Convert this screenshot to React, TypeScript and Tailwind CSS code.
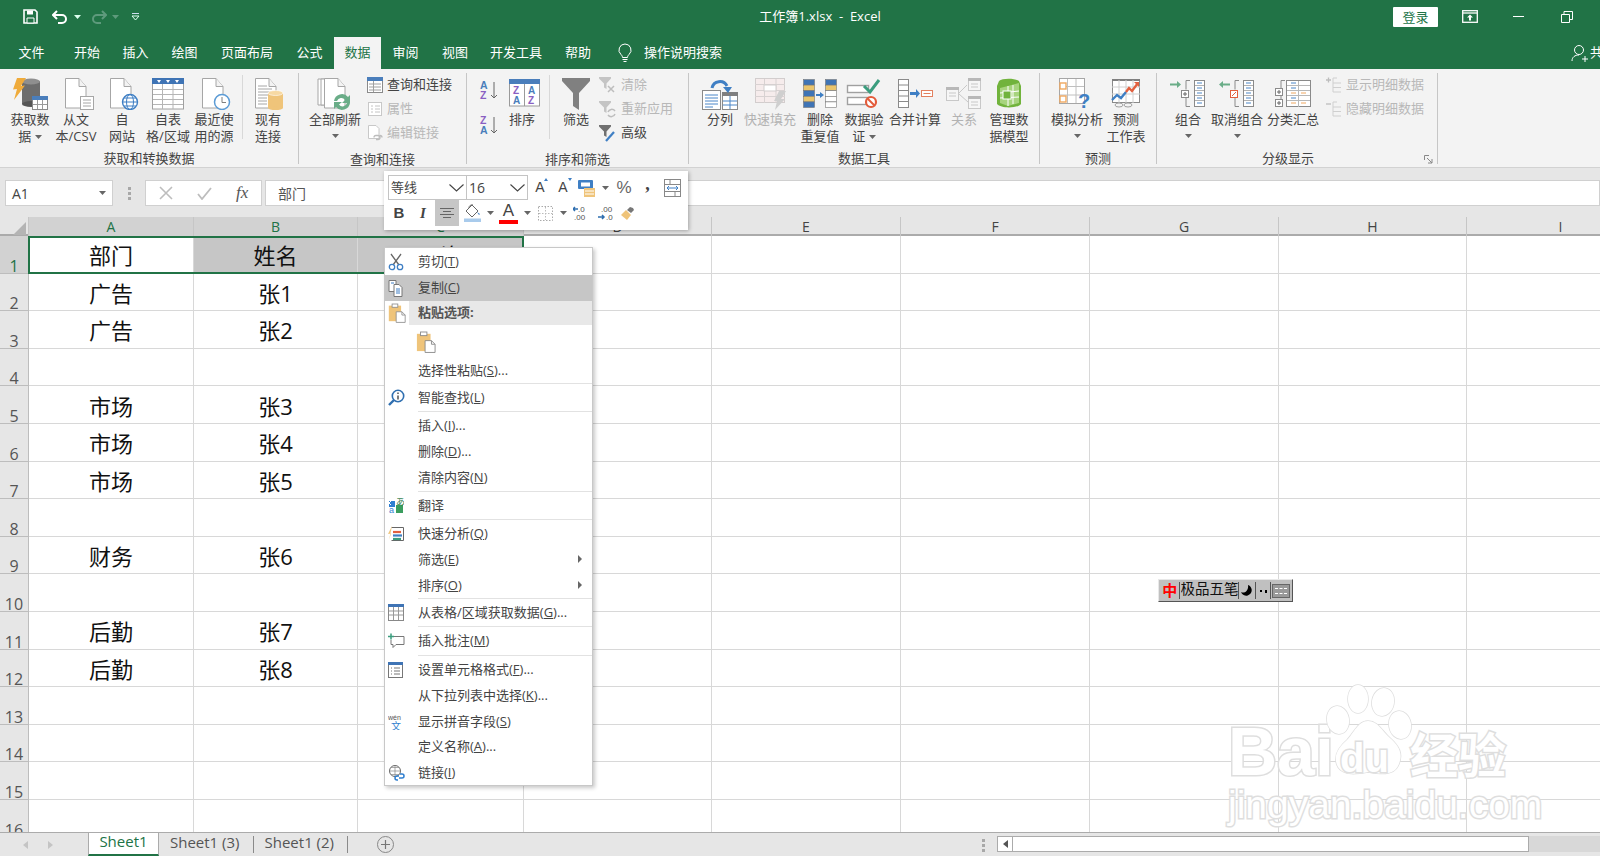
import type { ReactNode } from "react";

const Caret = ({ c = "#666" }: { c?: string }) => (
  <svg width="7" height="4" viewBox="0 0 7 4" className="inline-block">
    <path d="M0 0h7L3.5 4z" fill={c} />
  </svg>
);

const Doc = ({ x = 0 }: { x?: number }) => (
  <g transform={`translate(${x} 0)`}>
    <path d="M.5.5H14l7 8v21.5H.5z" fill="#fff" stroke="#a6a6a6" />
    <path d="M14 .5v8h7" fill="#f3f3f3" stroke="#a6a6a6" />
  </g>
);

// ribbon icons, all roughly 36x32
const IGetData = () => (
  <svg width="36" height="32" viewBox="0 0 36 32">
    <rect x="10" y="3" width="18" height="23" fill="#6d6d6d" />
    <ellipse cx="19" cy="26" rx="9" ry="3" fill="#555" />
    <ellipse cx="19" cy="3.5" rx="9" ry="3" fill="#8f8f8f" />
    <path d="M5 0h9L9 8l4-.5L2 22l3-11-4 .5z" fill="#efab3b" />
    <rect x="20.5" y="18.5" width="15" height="13" fill="#fff" stroke="#8a8a8a" />
    <rect x="20" y="18" width="16" height="4" fill="#4a7ebb" />
    <path d="M25.5 22v9M30.5 22v9M21 26.5h14" stroke="#9a9a9a" />
  </svg>
);
const IText = () => (
  <svg width="36" height="32" viewBox="0 0 36 32">
    <Doc x={7} />
    <rect x="22.5" y="18.5" width="13" height="13" fill="#fff" stroke="#a6a6a6" />
    <path d="M25 22h8M25 25h8M25 28h8" stroke="#a6a6a6" />
  </svg>
);
const IWeb = () => (
  <svg width="36" height="32" viewBox="0 0 36 32">
    <Doc x={6} />
    <circle cx="26" cy="24" r="7.5" fill="#fff" stroke="#3f7fc4" strokeWidth="1.4" />
    <ellipse cx="26" cy="24" rx="3.5" ry="7.5" fill="none" stroke="#3f7fc4" />
    <path d="M18.5 24h15M20 20h12M20 28h12" stroke="#3f7fc4" />
  </svg>
);
const ITable = () => (
  <svg width="36" height="32" viewBox="0 0 36 32">
    <rect x="2.5" y="1" width="31" height="30" fill="#fff" stroke="#a0a0a0" />
    <rect x="2" y="0" width="32" height="6" fill="#3f74b5" />
    <path d="M7 2h4l-2 3zM16 2h4l-2 3zM25 2h4l-2 3z" fill="#fff" />
    <path d="M12.5 6v25M23 6v25M3 11.5h30M3 16.5h30M3 21.5h30M3 26.5h30" stroke="#b5b5b5" />
  </svg>
);
const IRecent = () => (
  <svg width="36" height="32" viewBox="0 0 36 32">
    <Doc x={6} />
    <circle cx="26" cy="24" r="7.5" fill="#fff" stroke="#5b9bd5" strokeWidth="1.5" />
    <path d="M26 19v5.5h4" fill="none" stroke="#7f7f7f" />
  </svg>
);
const IExisting = () => (
  <svg width="36" height="32" viewBox="0 0 36 32">
    <Doc x={5} />
    <path d="M8 8h9M8 11h14M8 14h14M8 17h14M8 20h9M8 23h9M8 26h9" stroke="#a6a6a6" />
    <rect x="18" y="15" width="15" height="15" fill="#efc47a" />
    <ellipse cx="25.5" cy="15" rx="7.5" ry="2.5" fill="#f7d9a3" stroke="#fff" strokeWidth=".6" />
    <ellipse cx="25.5" cy="30" rx="7.5" ry="2" fill="#efc47a" />
  </svg>
);
const IRefresh = () => (
  <svg width="36" height="32" viewBox="0 0 36 32">
    <path d="M1 1h13v26H1z" fill="#fff" stroke="#a6a6a6" />
    <path d="M4 1h13v26H4z" fill="#fff" stroke="#a6a6a6" />
    <Doc x={7} />
    <path d="M17 23a8 8 0 0 1 14-4l2-2v8h-8l3-3a4.500 4.500 0 0 0-8 1z" fill="#6aad88" />
    <path d="M33 25a8 8 0 0 1-14 4l-2 2v-7h8l-3 2.500a4.500 4.500 0 0 0 8-1.500z" fill="#6aad88" />
  </svg>
);
const ISmallWin = () => (
  <svg width="16" height="16" viewBox="0 0 16 16">
    <rect x=".5" y=".5" width="15" height="15" fill="#fff" stroke="#8a8a8a" />
    <rect x="0" y="0" width="16" height="4" fill="#4a7ebb" />
    <path d="M6.500 4v11M2 7h12M2 10h12M2 13h12" stroke="#a0a0a0" />
  </svg>
);
const IProps = () => (
  <svg width="16" height="16" viewBox="0 0 16 16">
    <rect x="1.500" y="1.500" width="13" height="13" fill="#fff" stroke="#c8c8c8" />
    <path d="M4 5h2M8 5h5M4 8h2M8 8h5M4 11h2M8 11h5" stroke="#c4c4c4" />
  </svg>
);
const ILinks = () => (
  <svg width="16" height="16" viewBox="0 0 16 16">
    <path d="M1.500.5H9l3 3v10H1.500z" fill="#fff" stroke="#c8c8c8" />
    <path d="M7 12.500a2 2 0 0 1 2-2h2a2 2 0 0 1 0 4H9M15 12.500a2 2 0 0 0-2-2" fill="none" stroke="#bcbcbc" strokeWidth="1.300" />
  </svg>
);
const ISortAZ = ({ top, bottom, c1, c2 }: { top: string; bottom: string; c1: string; c2: string }) => (
  <svg width="20" height="22" viewBox="0 0 20 22">
    <text x="1" y="10" fontSize="10.500" fontWeight="700" fontFamily="'Liberation Sans',sans-serif" fill={c1}>{top}</text>
    <text x="1" y="20" fontSize="10.500" fontWeight="700" fontFamily="'Liberation Sans',sans-serif" fill={c2}>{bottom}</text>
    <path d="M15 3v16M12 16l3 3 3-3" fill="none" stroke="#666" />
  </svg>
);
const ISort = () => (
  <svg width="36" height="32" viewBox="0 0 36 32">
    <rect x="5.500" y="4" width="30" height="24" fill="#fff" stroke="#9a9a9a" />
    <rect x="5" y="1" width="31" height="5" fill="#4a7ebb" />
    <path d="M20.500 6v22" stroke="#9a9a9a" />
    <g fontSize="10" fontFamily="'Liberation Sans',sans-serif" fontWeight="700">
      <text x="9" y="16" fill="#8a5fc2">Z</text>
      <text x="9" y="26" fill="#4a7ebb">A</text>
      <text x="24" y="16" fill="#4a7ebb">A</text>
      <text x="24" y="26" fill="#8a5fc2">Z</text>
    </g>
  </svg>
);
const IFunnel = () => (
  <svg width="36" height="32" viewBox="0 0 36 32">
    <path d="M4 0h28v3L21 15v17l-6-4V15L4 3z" fill="#808080" />
  </svg>
);
const ISmallFunnel = ({ c, children }: { c: string; children?: ReactNode }) => (
  <svg width="18" height="18" viewBox="0 0 18 18">
    <path d="M0 1h12v1.500L7.500 7.500V13L5 11.500v-4L0 2.500z" fill={c} />
    {children}
  </svg>
);
const ISplit = () => (
  <svg width="36" height="32" viewBox="0 0 36 32">
    <rect x=".5" y="12.500" width="18" height="19" fill="#fff" stroke="#8a8a8a" />
    <path d="M3 17h13M3 20h13M3 23h13M3 26h13M3 29h8" stroke="#4a86c8" />
    <rect x="20.500" y="15" width="15" height="16.500" fill="#fff" stroke="#8a8a8a" />
    <rect x="20" y="14" width="16" height="4" fill="#7f7f7f" />
    <path d="M28 18v13M21 23h14M21 27h14" stroke="#4a86c8" />
    <path d="M10 10a8 8 0 0 1 15-2" fill="none" stroke="#3f7fc4" strokeWidth="3" />
    <path d="M21 9h9l-4 6z" fill="#3f7fc4" />
  </svg>
);
const IFlash = () => (
  <svg width="36" height="32" viewBox="0 0 36 32">
    <rect x="3.500" y=".5" width="29" height="24" fill="#f6ecec" stroke="#d2cdcd" />
    <path d="M3 6.500h30M3 12.500h30M3 18.500h30M12.500 1v24M24 1v24" stroke="#d8d2d2" />
    <rect x="12" y="7" width="12" height="6" fill="#fff" stroke="#d2cdcd" />
    <path d="M27 13h7l-5 8h4L23 32l2-9h-3z" fill="#cfcfcf" />
  </svg>
);
const IRemoveDup = () => {
  const col = (x: number, rows: string[]) =>
    rows.map((f, i) => <rect key={i} x={x + 0.5} y={i * 5.6 + 0.5} width="11" height="5.600" fill={f} stroke="#777" strokeWidth=".6" />);
  const b = "#3f74b5", y = "#e9c46c", w = "#fff";
  return (
    <svg width="36" height="30" viewBox="0 0 36 30">
      {col(1, [b, y, b, y, b])}
      {col(23, [b, y, w, w, w])}
      <path d="M14 15h4v-2l4 3-4 3v-2h-4z" fill="#3f7fc4" />
    </svg>
  );
};
const IValidate = () => (
  <svg width="36" height="32" viewBox="0 0 36 32">
    <rect x="1.500" y="7.500" width="21" height="7" fill="#fff" stroke="#a0a0a0" strokeWidth="1.400" />
    <rect x="1.500" y="19.500" width="21" height="7" fill="#fff" stroke="#a0a0a0" strokeWidth="1.400" />
    <path d="M18 8l6 6L33 2" fill="none" stroke="#3a9d7e" strokeWidth="3" />
    <circle cx="25" cy="24" r="5" fill="#fff" stroke="#e35b3a" strokeWidth="2.200" />
    <path d="M21.500 20.500l7 7" stroke="#e35b3a" strokeWidth="2" />
  </svg>
);
const IConsolidate = () => (
  <svg width="36" height="30" viewBox="0 0 36 30">
    <rect x="1.500" y=".5" width="10" height="28" fill="#fff" stroke="#8a8a8a" />
    <path d="M2 6h9M2 11.500h9M2 17h9M2 22.500h9" stroke="#8a8a8a" />
    <path d="M13 13h6v-3l4 4.500-4 4.500v-3h-6z" fill="#3f7fc4" />
    <rect x="24.500" y="11.500" width="11" height="6" fill="#fff" stroke="#e2805f" />
    <path d="M26.500 14.500h7" stroke="#e2805f" />
  </svg>
);
const IRelations = () => (
  <svg width="36" height="32" viewBox="0 0 36 32">
    <g fill="#f6f6f6" stroke="#c8c8c8">
      <rect x=".5" y="9.500" width="12" height="13" />
      <rect x="22.500" y=".5" width="12" height="12" />
      <rect x="22.500" y="18.500" width="12" height="12" />
    </g>
    <g fill="#b8b8b8">
      <rect x="0" y="9" width="13" height="3" />
      <rect x="22" y="0" width="13" height="3" />
      <rect x="22" y="18" width="13" height="3" />
    </g>
    <path d="M13 15L21 7M13 16l9 8M3 15h7M3 18h7M25 6h7M25 9h7M25 24h7M25 27h7" stroke="#c8c8c8" fill="none" />
  </svg>
);
const IModel = () => (
  <svg width="28" height="32" viewBox="0 0 28 32">
    <path d="M4 3c3-3 16-3 20 0l2 5v18c-2 4-20 5-24 0V8z" fill="#71b33c" />
    <path d="M13 8l11-3v20l-11 3zM5 10l8-2v20l-8-3z" fill="#a7d47e" />
    <path d="M13 8v20M18 7v19M5 15l19-2M5 20l19-1" stroke="#fff" />
    <rect x="8" y="13" width="8" height="8" fill="#71b33c" stroke="#fff" />
  </svg>
);
const IWhatIf = () => (
  <svg width="36" height="32" viewBox="0 0 36 32">
    <rect x=".5" y=".5" width="25" height="25" fill="#fff" stroke="#a6a6a6" />
    <path d="M8.500 1v24M17 1v24M1 8.500h24M1 17h24" stroke="#c0c0c0" />
    <rect x="1" y="5" width="6" height="6" fill="#fff" stroke="#f0a860" strokeWidth="1.400" />
    <rect x="1" y="18" width="6" height="6" fill="#fff" stroke="#f0a860" strokeWidth="1.400" />
    <text x="19" y="30" fontSize="20" fontWeight="700" fontFamily="'Liberation Sans',sans-serif" fill="#3f7fc4">?</text>
  </svg>
);
const IForecast = () => (
  <svg width="36" height="32" viewBox="0 0 36 32">
    <rect x="4.500" y="1.500" width="27" height="23" fill="#fff" stroke="#8a8a8a" />
    <rect x="4" y="1" width="28" height="2" fill="#7f7f7f" />
    <path d="M4 9h28M4 16h28M11 2v23M18 2v23M25 2v23" stroke="#d0d0d0" />
    <path d="M4 22l5-5 4 3 5-6" fill="none" stroke="#3f7fc4" strokeWidth="2.400" />
    <path d="M18 14l3-4 3 3 6-8" fill="none" stroke="#e2603f" strokeWidth="2.400" />
    <path d="M26 4h5v5z" fill="#e2603f" />
    <ellipse cx="11" cy="27" rx="4" ry="2" fill="none" stroke="#a0a0a0" />
    <ellipse cx="20" cy="27" rx="4" ry="2" fill="none" stroke="#a0a0a0" />
  </svg>
);
const ListCol = ({ x }: { x: number }) => (
  <g>
    <rect x={x + 0.5} y=".5" width="10" height="26" fill="#fff" stroke="#8a8a8a" />
    <path d={`M${x + 1} 5.500h9M${x + 1} 10.500h9M${x + 1} 15.500h9M${x + 1} 20.500h9`} stroke="#b0b0b0" />
    <path d={`M${x + 3} 3h5M${x + 3} 8h5M${x + 3} 13h5M${x + 3} 18h5M${x + 3} 23h5`} stroke="#4a86c8" />
  </g>
);
const IGroup = () => (
  <svg width="36" height="28" viewBox="0 0 36 28">
    <path d="M0 3.500h7V1l4 3.500L7 8V5.500H0z" fill="#6aad88" />
    <path d="M20 .5h-4v9M16 18v8.500h4" fill="none" stroke="#8a8a8a" />
    <rect x="11.500" y="10.500" width="7" height="7" fill="#fff" stroke="#8a8a8a" />
    <path d="M13 14h4M15 12v4" stroke="#666" />
    <ListCol x={24} />
  </svg>
);
const IUngroup = () => (
  <svg width="36" height="28" viewBox="0 0 36 28">
    <path d="M11 3.500H4V1L0 4.500 4 8V5.500h7z" fill="#6aad88" />
    <path d="M20 .5h-4v9M16 18v8.500h4" fill="none" stroke="#8a8a8a" />
    <rect x="11.500" y="10.500" width="7" height="7" fill="#fff" stroke="#e2603f" />
    <path d="M13 16l4-4" stroke="#e2603f" />
    <ListCol x={24} />
  </svg>
);
const ISubtotal = () => (
  <svg width="36" height="28" viewBox="0 0 36 28">
    <path d="M10 .5H6v8M6 16v3" fill="none" stroke="#8a8a8a" />
    <rect x=".5" y="8.500" width="7" height="7" fill="#fff" stroke="#8a8a8a" />
    <rect x=".5" y="19.500" width="7" height="7" fill="#fff" stroke="#8a8a8a" />
    <path d="M2 12h4M4 10v4M2 23h4M4 21v4" stroke="#666" />
    <rect x="11.500" y=".5" width="24" height="26" fill="#fff" stroke="#8a8a8a" />
    <path d="M12 5.500h23M12 10.500h23M12 15.500h23M12 20.500h23M23.500 1v26" stroke="#b8b8b8" />
    <path d="M16 3h5M16 8h5M16 18h5" stroke="#4a86c8" />
    <path d="M16 13h5M26 13h5M16 23h5M26 23h5" stroke="#f0a860" />
  </svg>
);
const IDetail = ({ plus }: { plus?: boolean }) => (
  <svg width="16" height="16" viewBox="0 0 16 16">
    <path d={plus ? "M0 3h5M2.500.5v5" : "M0 3h5"} stroke="#bdbdbd" strokeWidth="1.300" />
    <path d="M7 1h4M7 6h8M7 10.500h8M7 15h8M7 1v14" stroke="#cfcfcf" fill="none" />
  </svg>
);

const Big = ({ w, icon, lines, caret, dim }: { w: string; icon: ReactNode; lines: ReactNode[]; caret?: boolean; dim?: boolean }) => (
  <div className={`${w} shrink-0 flex flex-col items-center pt-[4px] ${dim ? "text-[#b2b2b2]" : "text-[#444]"}`}>
    <div className="h-[34px] flex items-center justify-center">{icon}</div>
    {lines.map((l, i) => (
      <div key={i} className="h-[16.500px] leading-[16.500px] whitespace-nowrap">{l}</div>
    ))}
    {caret && <div className="h-[16px] flex items-center"><Caret /></div>}
  </div>
);

const Small = ({ icon, label, dim, cls = "w-[16px]" }: { icon: ReactNode; label: string; dim?: boolean; cls?: string }) => (
  <div className={`h-[24px] flex items-center whitespace-nowrap ${dim ? "text-[#b8b8b8]" : "text-[#444]"}`}>
    <span className={`${cls} flex justify-center shrink-0`}>{icon}</span>
    <span className="ml-[4px]">{label}</span>
  </div>
);

const Group = ({ w, label, children, labelCls = "" }: { w: string; label: string; children: ReactNode; labelCls?: string }) => (
  <div className={`${w} shrink-0 h-[91px] mt-[4px] border-r border-[#c6c6c6] flex flex-col relative`}>
    <div className="h-[73px] flex">{children}</div>
    <div className={`h-[16px] mt-[6px] leading-[16px] text-center text-[#444] ${labelCls}`}>{label}</div>
  </div>
);

const VSep = ({ cls }: { cls: string }) => <div className={`w-px h-[64px] bg-[#d8d8d8] shrink-0 ${cls}`} />;

const tabs = [
  { t: "文件", w: "w-[63px]" },
  { t: "开始", w: "w-[48px]" },
  { t: "插入", w: "w-[49px]" },
  { t: "绘图", w: "w-[49px]" },
  { t: "页面布局", w: "w-[76px]" },
  { t: "公式", w: "w-[49px]" },
  { t: "数据", w: "w-[47px]", on: true },
  { t: "审阅", w: "w-[49px]" },
  { t: "视图", w: "w-[50px]" },
  { t: "开发工具", w: "w-[72px]" },
  { t: "帮助", w: "w-[52px]" },
];

const TitleBar = () => (
  <div className="h-[37px] bg-[#217346] flex items-center text-white shrink-0 pb-[4px]">
    <div className="w-[247px] flex items-center pl-[23px] shrink-0">
      <svg width="15" height="15" viewBox="0 0 15 15">
        <path d="M1 1h11l2 2v11H1z" fill="none" stroke="#fff" strokeWidth="1.600" />
        <path d="M4 1.500h6v4H4z" fill="#fff" />
        <path d="M4 9h7v5H4z" fill="#217346" stroke="#fff" />
      </svg>
      <svg width="17" height="14" viewBox="0 0 17 14" className="ml-[14px]">
        <path d="M5 1L1 5l4 4M2 5h8a4 4 0 0 1 0 8H6" fill="none" stroke="#fff" strokeWidth="2" />
      </svg>
      <span className="ml-[5px] flex"><Caret c="#dfe" /></span>
      <svg width="17" height="14" viewBox="0 0 17 14" className="ml-[9px]">
        <path d="M12 1l4 4-4 4M15 5H7a4 4 0 0 0 0 8h4" fill="none" stroke="#5e9a7c" strokeWidth="2" />
      </svg>
      <span className="ml-[5px] flex"><Caret c="#5e9a7c" /></span>
      <svg width="9" height="8" viewBox="0 0 9 8" className="ml-[12px]">
        <path d="M1 .500h7" stroke="#cde" />
        <path d="M1 3h7L4.500 7z" fill="none" stroke="#dfe" />
      </svg>
    </div>
    <div className="flex-1 text-center text-[13px]">工作簿1.xlsx&nbsp; -&nbsp; Excel</div>
    <div className="w-[207px] flex items-center shrink-0 h-full">
      <div className="w-[45px] h-[20px] bg-white rounded-[1px] text-[#217346] text-[13px] leading-[20px] text-center">登录</div>
      <svg width="16" height="13" viewBox="0 0 16 13" className="ml-[24px]">
        <rect x=".7" y=".7" width="14.600" height="11.600" fill="none" stroke="#fff" strokeWidth="1.300" />
        <path d="M1 3h14" stroke="#fff" strokeWidth="1.300" />
        <path d="M8 4.500l3 3H9v3H7v-3H5z" fill="#fff" />
      </svg>
      <div className="w-[11px] h-px bg-white ml-[35px]" />
      <svg width="12" height="12" viewBox="0 0 12 12" className="ml-[37px]">
        <path d="M.5 3.500h8v8h-8zM3 3.500v-3h8.500v8H8.500" fill="none" stroke="#fff" />
      </svg>
    </div>
  </div>
);

const TabRow = () => (
  <div className="h-[32px] bg-[#217346] flex text-white shrink-0 relative">
    {tabs.map((t) => (
      <div key={t.t} className={`${t.w} h-full shrink-0 flex items-center justify-center ${t.on ? "bg-[#f3f3f3] text-[#217346]" : ""}`}>
        {t.t}
      </div>
    ))}
    <svg width="14" height="20" viewBox="0 0 14 20" className="ml-[14px] mt-[6px] shrink-0">
      <path d="M7 1a6 6 0 0 0-4 10.500c1 1 1.500 2 1.500 3h5c0-1 .5-2 1.500-3A6 6 0 0 0 7 1zM4.500 16.500h5M5.500 18.500h3" fill="none" stroke="#fff" />
    </svg>
    <div className="ml-[12px] flex items-center whitespace-nowrap">操作说明搜索</div>
    <div className="ml-auto flex items-center w-[29px] overflow-hidden shrink-0">
      <svg width="18" height="18" viewBox="0 0 18 18" className="shrink-0">
        <circle cx="8" cy="6" r="4.500" fill="none" stroke="#fff" />
        <path d="M1 17c0-4 3-6 7-6M11 15h6M14 12v6" fill="none" stroke="#fff" />
      </svg>
      <span className="ml-[1px] shrink-0">共</span>
    </div>
  </div>
);

const Ribbon = () => (
  <div className="h-[99px] bg-[#f3f3f3] border-b border-[#d2d2d2] flex text-[13px] shrink-0">
    <Group w="w-[299px]" label="获取和转换数据">
      <div className="flex pl-[7px]">
        <Big w="w-[46px]" icon={<IGetData />} lines={["获取数", <>据 <Caret /></>]} />
        <Big w="w-[46px]" icon={<IText />} lines={["从文", "本/CSV"]} />
        <Big w="w-[46px]" icon={<IWeb />} lines={["自", "网站"]} />
        <Big w="w-[46px]" icon={<ITable />} lines={["自表", "格/区域"]} />
        <Big w="w-[46px]" icon={<IRecent />} lines={["最近使", "用的源"]} />
        <VSep cls="ml-[5px] mt-[2px]" />
        <div className="w-[2px]" />
        <Big w="w-[46px]" icon={<IExisting />} lines={["现有", "连接"]} />
      </div>
    </Group>
    <Group w="w-[168px]" label="查询和连接">
      <div className="flex pl-[4px]">
        <Big w="w-[64px]" icon={<IRefresh />} lines={["全部刷新"]} caret />
        <div className="flex flex-col">
          <Small icon={<ISmallWin />} label="查询和连接" />
          <Small icon={<IProps />} label="属性" dim />
          <Small icon={<ILinks />} label="编辑链接" dim />
        </div>
      </div>
    </Group>
    <Group w="w-[222px]" label="排序和筛选">
      <div className="flex pl-[12px]">
        <div className="w-[20px] flex flex-col pt-[6px] gap-[13px]">
          <ISortAZ top="A" bottom="Z" c1="#4a7ebb" c2="#8a5fc2" />
          <ISortAZ top="Z" bottom="A" c1="#8a5fc2" c2="#4a7ebb" />
        </div>
        <Big w="w-[46px]" icon={<ISort />} lines={["排序"]} />
        <VSep cls="ml-[4px] mt-[2px]" />
        <div className="w-[3px]" />
        <Big w="w-[46px]" icon={<IFunnel />} lines={["筛选"]} />
        <div className="flex flex-col">
          <Small cls="w-[18px]" dim label="清除" icon={<ISmallFunnel c="#c4c4c4"><path d="M9 10l6 6M15 10l-6 6" stroke="#bdbdbd" strokeWidth="1.500" /></ISmallFunnel>} />
          <Small cls="w-[18px]" dim label="重新应用" icon={<ISmallFunnel c="#c4c4c4"><path d="M9 12a4 4 0 0 1 7-1M16 14a4 4 0 0 1-7 1" fill="none" stroke="#bdbdbd" strokeWidth="1.500" /></ISmallFunnel>} />
          <Small cls="w-[18px]" label="高级" icon={<ISmallFunnel c="#707070"><path d="M7 17l8-9" stroke="#3f7fc4" strokeWidth="2.200" /></ISmallFunnel>} />
        </div>
      </div>
    </Group>
    <Group w="w-[351px]" label="数据工具">
      <div className="flex pl-[9px]">
        <Big w="w-[44px]" icon={<ISplit />} lines={["分列"]} />
        <Big w="w-[56px]" dim icon={<IFlash />} lines={["快速填充"]} />
        <Big w="w-[44px]" icon={<IRemoveDup />} lines={["删除", "重复值"]} />
        <Big w="w-[44px]" icon={<IValidate />} lines={["数据验", <>证 <Caret /></>]} />
        <Big w="w-[58px]" icon={<IConsolidate />} lines={["合并计算"]} />
        <Big w="w-[40px]" dim icon={<IRelations />} lines={["关系"]} />
        <Big w="w-[50px]" icon={<IModel />} lines={["管理数", "据模型"]} />
      </div>
    </Group>
    <Group w="w-[117px]" label="预测">
      <div className="flex pl-[7px]">
        <Big w="w-[60px]" icon={<IWhatIf />} lines={["模拟分析"]} caret />
        <Big w="w-[38px]" icon={<IForecast />} lines={["预测", "工作表"]} />
      </div>
    </Group>
    <Group w="w-[281px]" label="分级显示" labelCls="pr-[18px]">
      <div className="flex pl-[11px]">
        <Big w="w-[40px]" icon={<IGroup />} lines={["组合"]} caret />
        <Big w="w-[58px]" icon={<IUngroup />} lines={["取消组合"]} caret />
        <Big w="w-[54px]" icon={<ISubtotal />} lines={["分类汇总"]} />
        <div className="flex flex-col ml-[6px]">
          <Small icon={<IDetail plus />} label="显示明细数据" dim />
          <Small icon={<IDetail />} label="隐藏明细数据" dim />
        </div>
      </div>
      <svg width="10" height="10" viewBox="0 0 10 10" className="absolute right-[3px] bottom-[-1px]">
        <path d="M.5 5V.5H5M3 3l5 5M8 4v4H4" fill="none" stroke="#888" />
      </svg>
    </Group>
  </div>
);

const FormulaBar = () => (
  <div className="h-[49px] bg-[#e6e6e6] shrink-0 pt-[12px] flex">
    <div className="ml-[5px] w-[108px] h-[26px] bg-white border border-[#d0d0d0] flex items-center pl-[6px] text-[14px] text-[#444]">
      A1
      <span className="ml-auto mr-[6px] flex"><Caret /></span>
    </div>
    <div className="w-[32px] flex flex-col items-center justify-center gap-[2px] h-[26px]">
      <i className="w-[3px] h-[3px] bg-[#a8a8a8] block" />
      <i className="w-[3px] h-[3px] bg-[#a8a8a8] block" />
      <i className="w-[3px] h-[3px] bg-[#a8a8a8] block" />
    </div>
    <div className="w-[117px] h-[26px] bg-white border border-[#d0d0d0] flex items-center">
      <svg width="14" height="14" viewBox="0 0 14 14" className="ml-[13px]"><path d="M1 1l12 12M13 1L1 13" stroke="#bdbdbd" strokeWidth="1.600" /></svg>
      <svg width="15" height="13" viewBox="0 0 15 13" className="ml-[24px]"><path d="M1 7l4 5L14 1" fill="none" stroke="#bdbdbd" strokeWidth="1.800" /></svg>
      <span className="ml-[24px] italic text-[17px] font-['Liberation_Serif',serif] text-[#555]">fx</span>
    </div>
    <div className="ml-[3px] flex-1 h-[26px] bg-white border border-[#d0d0d0] flex items-center pl-[12px] text-[14px] text-[#555]">部门</div>
  </div>
);

const rows: Record<number, [string, string]> = {
  2: ["广告", "张1"],
  3: ["广告", "张2"],
  5: ["市场", "张3"],
  6: ["市场", "张4"],
  7: ["市场", "张5"],
  9: ["财务", "张6"],
  11: ["后勤", "张7"],
  12: ["后勤", "张8"],
};
const cols = ["A", "B", "C", "D", "E", "F", "G", "H", "I"];
const gridCls = "grid grid-cols-[29px_165px_164px_166px_188px_189px_189px_189px_188px_188px]";

const Sheet = () => (
  <div className="flex-1 overflow-hidden relative bg-white min-h-0">
    <div className={`${gridCls} h-[19px] bg-[#e6e6e6] border-b-2 border-[#ababab]`}>
      <div className="flex justify-end items-end pr-[2px] pb-[1px] border-r border-[#c6c6c6]">
        <div className="w-0 h-0 border-l-[13px] border-l-transparent border-b-[13px] border-b-[#b4b4b4]" />
      </div>
      {cols.map((c, i) => (
        <div key={c} className={`text-center text-[14px] leading-[19px] border-r border-[#c6c6c6] ${i < 3 ? "bg-[#d2d2d2] text-[#217346]" : "text-[#444]"}`}>{c}</div>
      ))}
    </div>
    <div className={`${gridCls} auto-rows-[37.6px] text-[22px] text-[#111]`}>
      {Array.from({ length: 16 }, (_, k) => k + 1).map((r) => (
        <div key={r} className="contents">
          <div className={`text-[16px] leading-[14px] text-center flex items-end justify-center border-b border-r border-[#bdbdbd] ${r === 1 ? "bg-[#d2d2d2] text-[#217346]" : "bg-[#e6e6e6] text-[#555]"}`}>{r}</div>
          {cols.map((c, i) => (
            <div key={c} className={`flex items-center justify-center pt-[3px] border-r border-b border-[#d8d8d8] ${r === 1 && (i === 1 || i === 2) ? "bg-[#c6c6c6]" : ""}`}>
              {r === 1 ? ["部门", "姓名", "工资"][i] : i < 2 ? rows[r]?.[i] : null}
            </div>
          ))}
        </div>
      ))}
    </div>
    <div className="absolute left-[28px] top-[19px] w-[496px] h-[38px] border-2 border-[#217346]" />
  </div>
);

const Tab = ({ children, on }: { children: string; on?: boolean }) => (
  <div className={`h-[23px] flex items-center justify-center text-[15px] ${on ? "w-[71px] bg-white text-[#217346] border-x border-b-2 border-x-[#ababab] border-b-[#217346] pb-[4px]" : "text-[#555] pl-[11px] pr-[13px] pb-[5px]"}`}>{children}</div>
);

const BottomBar = () => (
  <div className="h-[24px] bg-[#e6e6e6] border-t border-[#ababab] flex shrink-0 relative">
    <div className="w-[88px] flex items-center pl-[23px] gap-[20px] shrink-0">
      <span className="w-0 h-0 border-y-[4px] border-y-transparent border-r-[5px] border-r-[#c4c4c4]" />
      <span className="w-0 h-0 border-y-[4px] border-y-transparent border-l-[5px] border-l-[#c4c4c4]" />
    </div>
    <Tab on>Sheet1</Tab>
    <Tab>Sheet1 (3)</Tab>
    <div className="w-px h-[17px] bg-[#8a8a8a] mt-[3px]" />
    <Tab>Sheet1 (2)</Tab>
    <div className="w-px h-[17px] bg-[#8a8a8a] mt-[3px]" />
    <div className="ml-[29px] mt-[3px] w-[17px] h-[17px] rounded-full border border-[#888] flex items-center justify-center shrink-0">
      <svg width="9" height="9" viewBox="0 0 9 9"><path d="M0 4.500h9M4.500 0v9" stroke="#777" strokeWidth="1.200" /></svg>
    </div>
    <div className="ml-[588px] w-[4px] mt-[6px] flex flex-col gap-[2px] shrink-0">
      <i className="w-[3px] h-[3px] bg-[#a8a8a8] block" />
      <i className="w-[3px] h-[3px] bg-[#a8a8a8] block" />
      <i className="w-[3px] h-[3px] bg-[#a8a8a8] block" />
    </div>
    <div className="ml-[11px] mt-[3px] h-[16px] w-[16px] bg-white border border-[#ababab] flex items-center justify-center shrink-0">
      <span className="w-0 h-0 border-y-[4px] border-y-transparent border-r-[5px] border-r-[#555]" />
    </div>
    <div className="mt-[3px] h-[16px] w-[516px] bg-white border border-l-0 border-[#ababab] shrink-0" />
    <div className="mt-[3px] h-[16px] flex-1 bg-[#d8d8d8]" />
  </div>
);

const IconPaste = ({ w = 20, h = 22 }: { w?: number; h?: number }) => (
  <svg width={w} height={h} viewBox="0 0 22 24">
    <rect x="1" y="3" width="15" height="19" fill="#efc47a" />
    <rect x="5" y="1" width="7" height="4" fill="#fff" stroke="#8a8a8a" />
    <path d="M10 10.500h7l4 4v9H10z" fill="#fff" stroke="#8a8a8a" />
    <path d="M17 10.500v4h4" fill="none" stroke="#8a8a8a" />
  </svg>
);

type Item = { t: string; k: string; s?: string; h: string; icon?: ReactNode; arrow?: boolean; sep?: boolean; on?: boolean };

const menu: Item[] = [
  { t: "剪切", k: "T", h: "h-[26px]", icon: (
    <svg width="16" height="18" viewBox="0 0 16 18"><path d="M3 1l8 11M13 1L5 12" stroke="#666" strokeWidth="1.300" /><circle cx="4" cy="14" r="2.700" fill="none" stroke="#3f7fc4" strokeWidth="1.300" /><circle cx="12" cy="14" r="2.700" fill="none" stroke="#3f7fc4" strokeWidth="1.300" /></svg>
  ) },
  { t: "复制", k: "C", h: "h-[26px]", on: true, icon: (
    <svg width="16" height="17" viewBox="0 0 16 17"><path d="M1 .5h7v11H1z" fill="#fff" stroke="#777" /><path d="M6 4.500h5l3 3v9H6z" fill="#fff" stroke="#777" /><path d="M8 9h4M8 11h4M8 13h4M3 3h3" stroke="#3f7fc4" /></svg>
  ) },
];
const menu2: Item[] = [
  { t: "选择性粘贴", k: "S", s: "...", h: "h-[25px]", sep: true },
  { t: "智能查找", k: "L", h: "h-[27px]", sep: true, icon: (
    <svg width="17" height="17" viewBox="0 0 17 17"><circle cx="10" cy="7" r="5.700" fill="#fff" stroke="#2f6fb0" strokeWidth="1.600" /><path d="M6 11l-5 5" stroke="#2f6fb0" strokeWidth="2.400" /><path d="M10 3.500v1.500M10 6.500v4" stroke="#444" strokeWidth="1.400" /></svg>
  ) },
  { t: "插入", k: "I", s: "...", h: "h-[27px]" },
  { t: "删除", k: "D", s: "...", h: "h-[26px]" },
  { t: "清除内容", k: "N", h: "h-[26px]", sep: true },
  { t: "翻译", k: "", h: "h-[27px]", sep: true, icon: (
    <svg width="16" height="16" viewBox="0 0 16 16"><path d="M1 3h6v6H1z" fill="#2f7fd0" /><path d="M8 7h7v8H8z" fill="#3a9d5e" /><path d="M3 3l-2 2 2 2" fill="none" stroke="#fff" /><text x="8" y="7" fontSize="9" fill="#2b7a4b" fontFamily="'Noto Sans CJK JP',sans-serif">あ</text><text x="1" y="15" fontSize="9" fill="#2f7fd0" fontFamily="'Liberation Sans',sans-serif">a</text></svg>
  ) },
  { t: "快速分析", k: "Q", h: "h-[27px]", icon: (
    <svg width="16" height="16" viewBox="0 0 16 16"><path d="M3.500 1.500h12v13h-12" fill="#fff" stroke="#666" /><path d="M5 6h8" stroke="#e2603f" strokeWidth="2.200" /><path d="M5 9.500h9" stroke="#3f7fc4" strokeWidth="2.200" /><path d="M5 13h8" stroke="#3a9d7e" strokeWidth="2.200" /><path d="M4 0L0 8l3-.5L1 14" fill="#efc47a" /></svg>
  ) },
  { t: "筛选", k: "E", h: "h-[26px]", arrow: true },
  { t: "排序", k: "O", h: "h-[25px]", arrow: true, sep: true },
  { t: "从表格/区域获取数据", k: "G", s: "...", h: "h-[27px]", sep: true, icon: (
    <svg width="16" height="17" viewBox="0 0 16 17"><rect x=".5" y="1" width="15" height="15.500" fill="#fff" stroke="#888" /><rect x="0" y="0" width="16" height="3" fill="#3f74b5" /><path d="M5.500 3v13M10.500 3v13M1 7h14M1 11h14" stroke="#999" /></svg>
  ) },
  { t: "插入批注", k: "M", h: "h-[28px]", sep: true, icon: (
    <svg width="17" height="16" viewBox="0 0 17 16"><path d="M5 3.500h11v8H8l-3 3v-3H3V7" fill="none" stroke="#777" /><path d="M0 3.500h6M3 .5v6" stroke="#3a9d7e" strokeWidth="1.500" /></svg>
  ) },
  { t: "设置单元格格式", k: "F", s: "...", h: "h-[27px]", icon: (
    <svg width="15" height="16" viewBox="0 0 15 16"><rect x=".5" y=".5" width="14" height="15" fill="#fff" stroke="#777" /><rect x="0" y="0" width="15" height="3" fill="#3f74b5" /><path d="M3 6h1M6 6h6M3 9h1M6 9h6M3 12h1M6 12h6" stroke="#777" /></svg>
  ) },
  { t: "从下拉列表中选择", k: "K", s: "...", h: "h-[26px]" },
  { t: "显示拼音字段", k: "S", h: "h-[25px]", icon: (
    <svg width="16" height="16" viewBox="0 0 16 16"><text x="0" y="6" fontSize="7" fill="#555" fontFamily="'Liberation Sans',sans-serif">wén</text><text x="3" y="15.500" fontSize="10" fill="#2f7fd0" fontFamily="'Noto Sans CJK SC',sans-serif">文</text></svg>
  ) },
  { t: "定义名称", k: "A", s: "...", h: "h-[26px]" },
  { t: "链接", k: "I", h: "h-[26px]", icon: (
    <svg width="17" height="16" viewBox="0 0 17 16"><circle cx="7" cy="6" r="5.500" fill="#fff" stroke="#666" /><path d="M1.500 6h11M7 .5v11M3 2.500h8M3 9.500h8" stroke="#888" strokeWidth=".7" /><path d="M7 13a2 2 0 0 1 2-2h2M10 15h-1a2 2 0 0 1-2-2M11 13h3a2 2 0 0 0 0-4h-2" fill="none" stroke="#2f7fd0" strokeWidth="1.500" /></svg>
  ) },
];

const Row = ({ m }: { m: Item }) => (
  <>
    <div className={`${m.h} flex items-center relative ${m.on ? "bg-[#c6c6c6]" : ""}`}>
      <span className="w-[33px] flex justify-start shrink-0 pl-[3px]">{m.icon}</span>
      <span className="whitespace-nowrap">
        {m.t}
        {m.k && <>(<u>{m.k}</u>)</>}
        {m.s}
      </span>
      {m.arrow && <span className="absolute right-[10px] top-[8px] w-0 h-0 border-y-[4px] border-y-transparent border-l-[4px] border-l-[#666]" />}
    </div>
    {m.sep && <div className="ml-[33px] h-px bg-[#e2e2e2]" />}
  </>
);

const ContextMenu = () => (
  <div className="absolute left-[384px] top-[247px] w-[209px] h-[539px] bg-white border border-[#c8c8c8] shadow-[2px_2px_4px_rgba(0,0,0,0.22)] text-[13px] text-[#444] pt-px">
    {menu.map((m) => <Row key={m.t} m={m} />)}
    <div className="h-[24px] flex items-center">
      <span className="w-[24px] flex justify-start pl-[3px] shrink-0"><IconPaste w={18} h={20} /></span>
      <div className="flex-1 h-full bg-[#e8e8e8] flex items-center pl-[9px] font-bold text-[#555]">粘贴选项:</div>
    </div>
    <div className="h-[33px] pl-[31px] flex items-center"><IconPaste /></div>
    {menu2.map((m) => <Row key={m.t} m={m} />)}
  </div>
);

const Mini = ({ cls, children }: { cls: string; children: ReactNode }) => (
  <span className={`${cls} h-full flex items-center justify-center shrink-0`}>{children}</span>
);

const Chevron = () => (
  <svg width="15" height="8" viewBox="0 0 15 8" className="ml-auto mr-[2px]"><path d="M.5.5L7.500 7l7-6.500" fill="none" stroke="#444" strokeWidth="1.100" /></svg>
);

const MiniToolbar = () => (
  <div className="absolute left-[384px] top-[171px] w-[304px] h-[59px] bg-white shadow-[1px_1px_4px_rgba(0,0,0,0.3)] pl-[4px] pt-[4px] text-[#444]">
    <div className="h-[25px] flex">
      <div className="w-[79px] h-full border border-[#c4c4c4] flex items-center pl-[2px] text-[13px]">等线<Chevron /></div>
      <div className="w-[61px] h-full border border-l-0 border-[#c4c4c4] flex items-center pl-[2px] text-[14px]">16<Chevron /></div>
      <Mini cls="w-[22px] ml-[1px]"><span className="text-[14px] font-['Liberation_Sans',sans-serif] relative">A<i className="absolute -right-[3px] top-[1px] w-0 h-0 border-x-[2.500px] border-x-transparent border-b-[3px] border-b-[#3f7fc4]" /></span></Mini>
      <Mini cls="w-[24px]"><span className="text-[14px] font-['Liberation_Sans',sans-serif] relative">A<i className="absolute -right-[4px] top-[1px] w-0 h-0 border-x-[2.500px] border-x-transparent border-t-[3px] border-t-[#3f7fc4]" /></span></Mini>
      <Mini cls="w-[22px]">
        <svg width="17" height="18" viewBox="0 0 17 18"><rect x="0" y="1" width="15" height="9" rx="1" fill="#3f7fc4" /><rect x="3" y="3.500" width="9" height="4" fill="#fff" /><rect x="6" y="9" width="11" height="9" fill="#efc47a" /><path d="M7 12h9M7 15h9" stroke="#fff" /></svg>
      </Mini>
      <Mini cls="w-[16px]"><Caret /></Mini>
      <Mini cls="w-[22px] text-[17px] font-['Liberation_Sans',sans-serif]"><span className="text-[#666]">%</span></Mini>
      <Mini cls="w-[25px] font-bold text-[18px]"><span className="font-['Liberation_Serif',serif] -mt-[6px]">,</span></Mini>
      <Mini cls="w-[24px]">
        <svg width="17" height="18" viewBox="0 0 17 18"><rect x=".5" y=".5" width="16" height="17" fill="#fff" stroke="#888" /><path d="M1 5.500h15M1 12.500h15M6 1v4M11 13v4" stroke="#888" /><path d="M3 9h11M5 7L3 9l2 2M12 7l2 2-2 2" fill="none" stroke="#3f7fc4" /></svg>
      </Mini>
    </div>
    <div className="h-[26px] flex">
      <Mini cls="w-[24px] ml-[-1px] text-[15px] font-bold font-['Liberation_Sans',sans-serif]"><span>B</span></Mini>
      <Mini cls="w-[24px] text-[15px] italic font-bold font-['Liberation_Serif',serif]"><span>I</span></Mini>
      <Mini cls="w-[24px] bg-[#c6c6c6]">
        <svg width="14" height="11" viewBox="0 0 14 11"><path d="M0 .5h14M3 3.500h8M0 6.500h14M3 9.500h8" stroke="#666" /></svg>
      </Mini>
      <Mini cls="w-[26px]">
        <svg width="17" height="18" viewBox="0 0 17 18"><path d="M8 1l6 6-6 6-6-6z" fill="#fff" stroke="#666" /><path d="M5 4a3 3 0 0 1 4-3" fill="none" stroke="#666" /><path d="M13 8l2 3 1-1z" fill="#3f7fc4" /><rect x="0" y="14.500" width="17" height="3.500" fill="#a9cbec" /></svg>
      </Mini>
      <Mini cls="w-[10px]"><Caret /></Mini>
      <Mini cls="w-[27px]">
        <span className="relative text-[17px] leading-[17px] font-['Liberation_Sans',sans-serif] pb-[5px]">A<i className="absolute left-[-4px] right-[-4px] bottom-0 h-[4px] bg-[#f00]" /></span>
      </Mini>
      <Mini cls="w-[10px]"><Caret /></Mini>
      <Mini cls="w-[26px]">
        <svg width="15" height="15" viewBox="0 0 15 15"><rect x=".5" y=".5" width="14" height="14" fill="none" stroke="#aaa" strokeDasharray="1.500 1.500" /><path d="M7.500 1v13M1 7.500h13" stroke="#bbb" strokeDasharray="1.500 1.500" /></svg>
      </Mini>
      <Mini cls="w-[10px]"><Caret /></Mini>
      <Mini cls="w-[25px]">
        <svg width="15" height="16" viewBox="0 0 15 16"><path d="M0 4h5M2 2L0 4l2 2" fill="none" stroke="#2f6fb0" strokeWidth="1.500" /><g fontSize="8" fill="#555" fontFamily="'Liberation Sans',sans-serif"><text x="5" y="7">.0</text><text x="1" y="15">.00</text></g></svg>
      </Mini>
      <Mini cls="w-[24px]">
        <svg width="15" height="16" viewBox="0 0 15 16"><g fontSize="8" fill="#555" fontFamily="'Liberation Sans',sans-serif"><text x="3" y="7">.00</text><text x="8" y="15">.0</text></g><path d="M0 12h6M4 10l2 2-2 2" fill="none" stroke="#2f6fb0" strokeWidth="1.500" /></svg>
      </Mini>
      <Mini cls="w-[22px]">
        <svg width="16" height="16" viewBox="0 0 16 16"><path d="M1 10l5-5 5 5-4 5z" fill="#efc47a" /><path d="M7 5l3-3 3 1 1 2-3 3" fill="#777" /></svg>
      </Mini>
    </div>
  </div>
);

const ImeBar = () => (
  <div className="absolute left-[1158px] top-[579px] w-[135px] h-[23px] bg-[#c0c0c0] border border-t-[#e8e8e8] border-l-[#e8e8e8] border-r-[#555] border-b-[#555] flex items-center px-[2px] text-[15px] leading-none text-[#111]">
    <span className="w-[19px] h-[17px] flex items-center justify-center text-[#f00] font-bold text-[15px] border-r border-[#555]">中</span>
    <span className="w-[60px] h-[17px] whitespace-nowrap overflow-hidden text-[14.500px] border-r border-[#555] ml-[1px] text-center">极品五笔</span>
    <span className="w-[17px] h-[17px] flex items-center justify-center border-r border-[#555]">
      <svg width="11" height="11" viewBox="0 0 11 11"><path d="M7 0a5.500 5.500 0 1 1-7 7c3 2 8-1 7-7z" fill="#000" /></svg>
    </span>
    <span className="w-[16px] h-[17px] flex items-center justify-center border-r border-[#555] gap-[3px]">
      <i className="w-[2px] h-[2px] bg-black block" />
      <i className="w-[2px] h-[3px] bg-black block mt-[2px]" />
    </span>
    <span className="w-[18px] h-[14px] ml-[1px] border border-[#666] bg-[#999] flex items-center justify-center">
      <i className="w-[12px] h-[6px] block border-y border-dashed border-white" />
    </span>
  </div>
);

const Watermark = () => (
  <div className="absolute left-[1228px] top-[684px] w-[290px] h-[140px] pointer-events-none font-['Liberation_Sans',sans-serif] text-white [-webkit-text-stroke:3px_#dedede] [paint-order:stroke_fill]">
    <div className="absolute left-0 top-[33px] text-[68px] font-bold leading-[68px] [paint-order:stroke_fill]">Bai</div>
    <svg width="94" height="96" viewBox="0 0 94 96" className="absolute left-[96px] top-0">
      <g fill="#fff" stroke="#dedede" strokeWidth="1.500">
        <ellipse cx="14" cy="36" rx="11" ry="14" transform="rotate(-10 14 36)" />
        <ellipse cx="34" cy="15" rx="10" ry="14" />
        <ellipse cx="59" cy="18" rx="11" ry="14" transform="rotate(10 59 18)" />
        <ellipse cx="76" cy="41" rx="11" ry="14" transform="rotate(-10 76 41)" />
        <path d="M44 37c10 0 14 10 22 17 9 8 14 16 8 28-5 10-18 8-30 6-11 2-24 4-30-5-6-11 1-20 9-27 7-7 11-19 21-19z" />
      </g>
    </svg>
    <div className="absolute left-[112px] top-[54px] text-[40px] font-bold leading-[40px] [paint-order:stroke_fill]">du</div>
    <div className="absolute left-[182px] top-[43px] text-[48px] font-bold leading-[50px] whitespace-nowrap font-['Noto_Sans_CJK_SC',sans-serif] [paint-order:stroke_fill]">经验</div>
    <div className="absolute left-0 top-[100px] text-[39px] leading-[42px] whitespace-nowrap [paint-order:stroke_fill]">jingyan.baidu.com</div>
  </div>
);

export default function App() {
  return (
    <div className="w-[1600px] h-[856px] overflow-hidden relative flex flex-col bg-white text-[13px] font-['Open_Sans','Noto_Sans_CJK_SC',sans-serif]">
      <TitleBar />
      <TabRow />
      <Ribbon />
      <FormulaBar />
      <Sheet />
      <BottomBar />
      <Watermark />
      <ImeBar />
      <ContextMenu />
      <MiniToolbar />
    </div>
  );
}
